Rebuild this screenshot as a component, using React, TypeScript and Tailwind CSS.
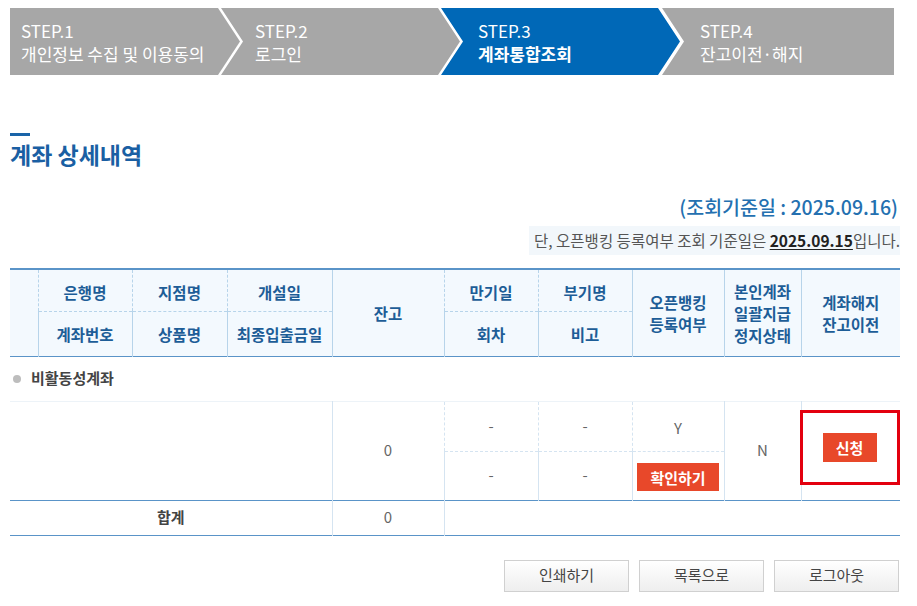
import React from "react";

const steps = [
    { label: "STEP.1", title: "개인정보 수집 및 이용동의", active: false },
    { label: "STEP.2", title: "로그인", active: false },
    { label: "STEP.3", title: "계좌통합조회", active: true },
    { label: "STEP.4", title: "잔고이전·해지", active: false },
];

// clip shapes for the chevrons, one per step
const stepShape = [
    "w-[230px] pl-[11px] [clip-path:polygon(0_0,208px_0,230px_50%,208px_100%,0_100%)]",
    "w-[239px] -ml-[19px] pl-[34px] [clip-path:polygon(0_0,217px_0,239px_50%,217px_100%,0_100%,22px_50%)]",
    "w-[239px] -ml-[19px] pl-[37px] [clip-path:polygon(0_0,217px_0,239px_50%,217px_100%,0_100%,22px_50%)]",
    "w-[232px] -ml-[18px] pl-[38px] [clip-path:polygon(0_0,100%_0,100%_100%,0_100%,22px_50%)]",
];

const th = "border-l border-[#b7d4ea] text-center align-middle";
const td = "border-l border-[#d5e4f1] text-center align-middle text-[15px] text-[#666]";
const dash = "border-b border-dashed border-[#a9c7e0]";

function StepBar() {
    return (
        <div className="flex h-[67px]">
            {steps.map((s, i) => (
                <div
                    key={s.label}
                    className={`${stepShape[i]} flex flex-col justify-center text-white text-[17px] leading-[23px] ${s.active ? "bg-[#0068b7]" : "bg-[#a7a7a7]"}`}
                >
                    <span className="whitespace-nowrap">{s.label}</span>
                    <span className={`whitespace-nowrap ${s.active ? "font-bold" : ""}`}>{s.title}</span>
                </div>
            ))}
        </div>
    );
}

function OrangeButton({ children, className }: { children: React.ReactNode; className: string }) {
    return (
        <button className={`${className} bg-[#e8482a] text-white text-[15px] font-bold leading-none`}>
            {children}
        </button>
    );
}

function AccountTable() {
    return (
        <table className="w-[890px] table-fixed border-collapse border-t-2 border-[#5a94c8]">
            <colgroup>
                <col className="w-[28px]" />
                <col className="w-[94px]" />
                <col className="w-[95px]" />
                <col className="w-[105px]" />
                <col className="w-[112px]" />
                <col className="w-[94px]" />
                <col className="w-[94px]" />
                <col className="w-[92px]" />
                <col className="w-[77px]" />
                <col className="w-[99px]" />
            </colgroup>
            <thead className="bg-[#f3f9fe] text-[15.5px] font-bold text-[#1d5d97] leading-[22px]">
                <tr className="h-[42px]">
                    <th rowSpan={2}></th>
                    <th className={`${th} ${dash} pt-[3px]`}>은행명</th>
                    <th className={`${th} ${dash} pt-[3px]`}>지점명</th>
                    <th className={`${th} ${dash} pt-[3px]`}>개설일</th>
                    <th rowSpan={2} className={th}>잔고</th>
                    <th className={`${th} ${dash} pt-[3px]`}>만기일</th>
                    <th className={`${th} ${dash} pt-[3px]`}>부기명</th>
                    <th rowSpan={2} className={th}>오픈뱅킹<br />등록여부</th>
                    <th rowSpan={2} className={th}>본인계좌<br />일괄지급<br />정지상태</th>
                    <th rowSpan={2} className={th}>계좌해지<br />잔고이전</th>
                </tr>
                <tr className="h-[45px]">
                    <th className={th}>계좌번호</th>
                    <th className={th}>상품명</th>
                    <th className={th}>최종입출금일</th>
                    <th className={th}>회차</th>
                    <th className={th}>비고</th>
                </tr>
            </thead>
            <tbody>
                <tr className="h-[45px] border-t border-b border-t-[#5a94c8] border-b-[#edf3f8]">
                    <td colSpan={10} className="pl-[3px] align-middle">
                        <div className="flex items-center gap-[10px] text-[15px] font-bold text-[#444]">
                            <span className="w-[8px] h-[8px] rounded-full bg-[#bdbdbd]" />
                            비활동성계좌
                        </div>
                    </td>
                </tr>
                <tr className="h-[50px]">
                    <td colSpan={4} rowSpan={2}></td>
                    <td rowSpan={2} className={td}>0</td>
                    <td className={`${td} ${dash}`}>-</td>
                    <td className={`${td} ${dash}`}>-</td>
                    <td className={`${td} ${dash} pt-[4px]`}>Y</td>
                    <td rowSpan={2} className={td}>N</td>
                    <td rowSpan={2} className={td}>
                        <div className="relative -top-[3px] -ml-[2px] flex h-[75px] w-[100px] items-center justify-center border-[3px] border-[#e3000f]">
                            <OrangeButton className="w-[54px] h-[29px]">신청</OrangeButton>
                        </div>
                    </td>
                </tr>
                <tr className="h-[49px]">
                    <td className={td}>-</td>
                    <td className={td}>-</td>
                    <td className={td}>
                        <OrangeButton className="w-[82px] h-[28px] mt-[3px]">확인하기</OrangeButton>
                    </td>
                </tr>
                <tr className="h-[35px] border-t border-b border-[#5a94c8]">
                    <td colSpan={4} className="text-center align-middle text-[15px] font-bold text-[#444]">합계</td>
                    <td className={td}>0</td>
                    <td colSpan={5} className={td}></td>
                </tr>
            </tbody>
        </table>
    );
}

export default function App() {
    return (
        <div className="w-[917px] h-[606px] overflow-hidden bg-white pl-[10px] pt-[8px] font-['Noto_Sans_CJK_KR','Noto_Sans',sans-serif]">
            <StepBar />

            <div className="mt-[58px] h-[3px] w-[20px] bg-[#1a64a8]" />
            <h2 className="mt-[5px] text-[23px] font-bold leading-[27px] text-[#1a5fa3]">계좌 상세내역</h2>

            <div className="w-[890px]">
                <p className="mt-[27px] pr-[2px] text-right text-[19.5px] font-medium leading-[23px] text-[#2470b0]">
                    (조회기준일 : 2025.09.16)
                </p>
                <div className="mt-[8px] flex justify-end">
                    <p className="h-[29px] bg-[#f2f7fb] pl-[5px] text-[15.5px] leading-[29px] text-[#555]">
                        단, 오픈뱅킹 등록여부 조회 기준일은{" "}
                        <span className="font-bold text-[#222] underline underline-offset-2">2025.09.15</span>
                        입니다.
                    </p>
                </div>

                <div className="mt-[13px]">
                    <AccountTable />
                </div>

                <div className="mt-[24px] flex justify-end gap-[10px] pr-[1px]">
                    {["인쇄하기", "목록으로", "로그아웃"].map((b) => (
                        <button
                            key={b}
                            className="h-[32px] w-[125px] border border-[#d0d0d0] bg-linear-to-b from-white to-[#eeeeee] text-[15px] text-[#444]"
                        >
                            {b}
                        </button>
                    ))}
                </div>
            </div>
        </div>
    );
}
